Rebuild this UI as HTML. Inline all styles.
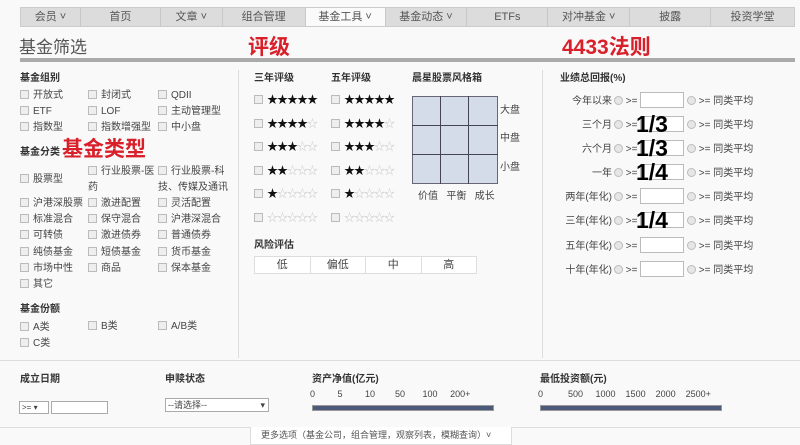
<!DOCTYPE html>
<html><head><meta charset="utf-8"><style>
*{margin:0;padding:0;box-sizing:border-box}
body{width:800px;height:445px;background:#f9f9f9;font-family:"Liberation Sans","Noto Sans CJK SC",sans-serif;font-size:10px;color:#444;position:relative;overflow:hidden;line-height:14px}
.a{position:absolute;white-space:nowrap;line-height:14px}
.nav{position:absolute;left:20px;top:7px;width:775px;height:20px;background:#dcdcdc;border:1px solid #ccc;display:flex}
.nav div{border-right:1px solid #c8c8c8;text-align:center;line-height:18px;font-size:11px;color:#555}
.nav .on{background:#fafafa}
.cb{display:inline-block;width:9px;height:9px;border:1px solid #bbb;background:#eee;vertical-align:-1px;margin-right:4px}
.b{font-weight:bold;color:#333}
.red{color:#d9202a;font-weight:bold;font-size:21px;line-height:26px}
.big{color:#000;font-weight:bold;font-size:23px;line-height:23px}
.st{letter-spacing:-1px;font-size:11px;color:#111}
.st i{font-style:normal;color:#ccc}
.rd{display:inline-block;width:9px;height:9px;border-radius:50%;border:1px solid #bbb;background:#e6e6e6;vertical-align:-1px}
.in{display:inline-block;width:44px;height:16px;border:1px solid #bbb;background:#fff;vertical-align:-4px}
.bar{position:absolute;height:6px;background:#4a5a78;border:1px solid #999}
</style></head><body>
<div class="nav">
<div style="width:60px">会员 ˅</div><div style="width:80px">首页</div><div style="width:62px">文章 ˅</div><div style="width:83px">组合管理</div><div class="on" style="width:80px">基金工具 ˅</div><div style="width:82px">基金动态 ˅</div><div style="width:81px">ETFs</div><div style="width:82px">对冲基金 ˅</div><div style="width:81px">披露</div><div style="width:83px;border:0">投资学堂</div>
</div>
<div class="a" style="left:19px;top:37px;font-size:17px;line-height:22px;color:#555">基金筛选</div>
<div class="a red" style="left:248px;top:35px">评级</div>
<div class="a red" style="left:562px;top:35px">4433法则</div>
<div style="position:absolute;left:20px;top:58px;width:775px;height:4px;background:#aaa"></div>
<div style="position:absolute;left:238px;top:70px;width:1px;height:288px;background:#ddd"></div>
<div style="position:absolute;left:542px;top:70px;width:1px;height:288px;background:#ddd"></div>

<div class="a b" style="left:20px;top:72px">基金组别</div>
<div class="a" style="left:20px;top:89px"><span class="cb"></span>开放式</div>
<div class="a" style="left:88px;top:89px"><span class="cb"></span>封闭式</div>
<div class="a" style="left:158px;top:89px"><span class="cb"></span>QDII</div>
<div class="a" style="left:20px;top:105px"><span class="cb"></span>ETF</div>
<div class="a" style="left:88px;top:105px"><span class="cb"></span>LOF</div>
<div class="a" style="left:158px;top:105px"><span class="cb"></span>主动管理型</div>
<div class="a" style="left:20px;top:121px"><span class="cb"></span>指数型</div>
<div class="a" style="left:88px;top:121px"><span class="cb"></span>指数增强型</div>
<div class="a" style="left:158px;top:121px"><span class="cb"></span>中小盘</div>
<div class="a b" style="left:20px;top:146px">基金分类</div>
<div class="a red" style="left:62px;top:137px">基金类型</div>
<div class="a" style="left:20px;top:173px"><span class="cb"></span>股票型</div>
<div class="a" style="left:88px;top:164px;line-height:16px"><span class="cb"></span>行业股票-医<br>药</div>
<div class="a" style="left:158px;top:164px;line-height:16px"><span class="cb"></span>行业股票-科<br>技、传媒及通讯</div>
<div class="a" style="left:20px;top:196px;line-height:16.2px"><span class="cb"></span>沪港深股票<br><span class="cb"></span>标准混合<br><span class="cb"></span>可转债<br><span class="cb"></span>纯债基金<br><span class="cb"></span>市场中性<br><span class="cb"></span>其它</div>
<div class="a" style="left:88px;top:196px;line-height:16.2px"><span class="cb"></span>激进配置<br><span class="cb"></span>保守混合<br><span class="cb"></span>激进债券<br><span class="cb"></span>短债基金<br><span class="cb"></span>商品</div>
<div class="a" style="left:158px;top:196px;line-height:16.2px"><span class="cb"></span>灵活配置<br><span class="cb"></span>沪港深混合<br><span class="cb"></span>普通债券<br><span class="cb"></span>货币基金<br><span class="cb"></span>保本基金</div>
<div class="a b" style="left:20px;top:303px">基金份额</div>
<div class="a" style="left:20px;top:320px;line-height:16px"><span class="cb"></span>A类<br><span class="cb"></span>C类</div>
<div class="a" style="left:88px;top:320px"><span class="cb"></span>B类</div>
<div class="a" style="left:158px;top:320px"><span class="cb"></span>A/B类</div>

<div class="a b" style="left:254px;top:72px">三年评级</div>
<div class="a b" style="left:331px;top:72px">五年评级</div>
<div class="a b" style="left:412px;top:72px">晨星股票风格箱</div>
<div class="a" style="left:254px;top:89px;line-height:23.6px"><span class="cb"></span><span class="st">★★★★★</span><br><span class="cb"></span><span class="st">★★★★<i>☆</i></span><br><span class="cb"></span><span class="st">★★★<i>☆☆</i></span><br><span class="cb"></span><span class="st">★★<i>☆☆☆</i></span><br><span class="cb"></span><span class="st">★<i>☆☆☆☆</i></span><br><span class="cb"></span><span class="st"><i>☆☆☆☆☆</i></span></div>
<div class="a" style="left:331px;top:89px;line-height:23.6px"><span class="cb"></span><span class="st">★★★★★</span><br><span class="cb"></span><span class="st">★★★★<i>☆</i></span><br><span class="cb"></span><span class="st">★★★<i>☆☆</i></span><br><span class="cb"></span><span class="st">★★<i>☆☆☆</i></span><br><span class="cb"></span><span class="st">★<i>☆☆☆☆</i></span><br><span class="cb"></span><span class="st"><i>☆☆☆☆☆</i></span></div>
<svg class="a" style="left:412px;top:96px" width="86" height="88"><rect x="0.5" y="0.5" width="85" height="87" fill="#d3dce8" stroke="#667"/><path d="M28.5 0V88M56.5 0V88M0 29.5H86M0 58.5H86" stroke="#445" stroke-width="1"/></svg>
<div class="a" style="left:500px;top:104px">大盘</div>
<div class="a" style="left:500px;top:132px">中盘</div>
<div class="a" style="left:500px;top:161px">小盘</div>
<div class="a" style="left:418px;top:190px">价值 &nbsp;&nbsp;平衡 &nbsp;&nbsp;成长</div>
<div class="a b" style="left:254px;top:239px">风险评估</div>
<div class="a" style="left:254px;top:256px;width:223px;height:18px;border:1px solid #ddd;background:#fff;display:flex;line-height:16px;text-align:center;font-size:11px">
<div style="flex:1;border-right:1px solid #ddd">低</div><div style="flex:1;border-right:1px solid #ddd">偏低</div><div style="flex:1;border-right:1px solid #ddd">中</div><div style="flex:1">高</div></div>

<div class="a b" style="left:560px;top:72px">业绩总回报(%)</div>
<div class="a" style="left:560px;top:90px;line-height:24.1px;text-align:right;width:52px">今年以来<br>三个月<br>六个月<br>一年<br>两年(年化)<br>三年(年化)<br>五年(年化)<br>十年(年化)</div>
<div class="a" style="left:614px;top:90px;line-height:24.1px"><span class="rd"></span> &gt;= <span class="in"></span> <span class="rd"></span> &gt;= 同类平均<br><span class="rd"></span> &gt;= <span class="in"></span> <span class="rd"></span> &gt;= 同类平均<br><span class="rd"></span> &gt;= <span class="in"></span> <span class="rd"></span> &gt;= 同类平均<br><span class="rd"></span> &gt;= <span class="in"></span> <span class="rd"></span> &gt;= 同类平均<br><span class="rd"></span> &gt;= <span class="in"></span> <span class="rd"></span> &gt;= 同类平均<br><span class="rd"></span> &gt;= <span class="in"></span> <span class="rd"></span> &gt;= 同类平均<br><span class="rd"></span> &gt;= <span class="in"></span> <span class="rd"></span> &gt;= 同类平均<br><span class="rd"></span> &gt;= <span class="in"></span> <span class="rd"></span> &gt;= 同类平均</div>
<div class="a big" style="left:636px;top:113px">1/3</div>
<div class="a big" style="left:636px;top:137px">1/3</div>
<div class="a big" style="left:636px;top:161px">1/4</div>
<div class="a big" style="left:636px;top:209px">1/4</div>

<div style="position:absolute;left:0;top:360px;width:800px;height:1px;background:#ddd"></div>
<div class="a b" style="left:20px;top:373px">成立日期</div>
<div class="a b" style="left:165px;top:373px">申赎状态</div>
<div class="a b" style="left:312px;top:373px">资产净值(亿元)</div>
<div class="a b" style="left:540px;top:373px">最低投资额(元)</div>
<div class="a" style="left:19px;top:401px;width:30px;height:13px;border:1px solid #aaa;background:#fff;font-size:8px;line-height:11px;padding-left:2px">&gt;= ▾</div>
<div class="a" style="left:51px;top:401px;width:57px;height:13px;border:1px solid #aaa;background:#fff"></div>
<div class="a" style="left:165px;top:398px;width:104px;height:14px;border:1px solid #aaa;background:#fff;font-size:9px;line-height:12px;padding-left:2px">--请选择-- <span style="float:right;margin-right:3px">▾</span></div>
<div class="a" style="left:310px;top:387px;font-size:9px">0 &nbsp;&nbsp;&nbsp;&nbsp;&nbsp;&nbsp;&nbsp;&nbsp;5 &nbsp;&nbsp;&nbsp;&nbsp;&nbsp;&nbsp;&nbsp;&nbsp;10 &nbsp;&nbsp;&nbsp;&nbsp;&nbsp;&nbsp;&nbsp;50 &nbsp;&nbsp;&nbsp;&nbsp;&nbsp;&nbsp;100 &nbsp;&nbsp;&nbsp;&nbsp;200+</div>
<div class="bar" style="left:312px;top:405px;width:182px"></div>
<div class="a" style="left:538px;top:387px;font-size:9px">0 &nbsp;&nbsp;&nbsp;&nbsp;&nbsp;&nbsp;&nbsp;&nbsp;&nbsp;500 &nbsp;&nbsp;&nbsp;&nbsp;1000 &nbsp;&nbsp;&nbsp;1500 &nbsp;&nbsp;&nbsp;2000 &nbsp;&nbsp;&nbsp;2500+</div>
<div class="bar" style="left:540px;top:405px;width:182px"></div>
<div style="position:absolute;left:0;top:427px;width:800px;height:1px;background:#ddd"></div>
<div class="a" style="left:250px;top:427px;width:262px;height:18px;background:#fff;border:1px solid #ddd;border-top:0;font-size:9px;line-height:17px;padding-left:10px;color:#555">更多选项（基金公司，组合管理，观察列表，模糊查询）˅</div>
</body></html>
